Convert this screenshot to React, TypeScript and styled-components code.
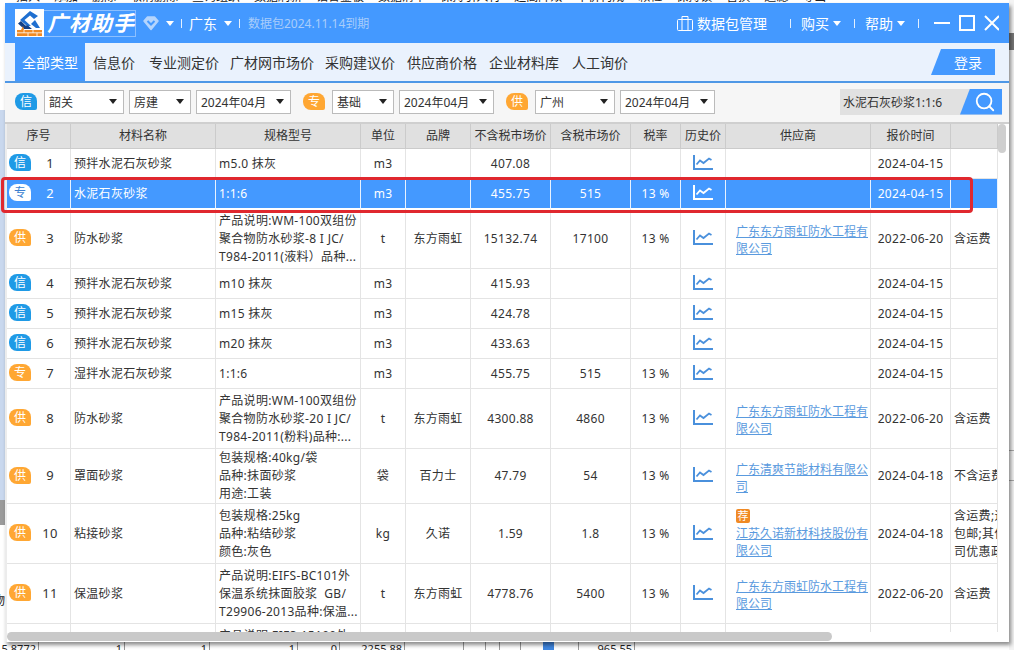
import React from 'react';
import styled, { createGlobalStyle } from 'styled-components';
import { Search } from 'lucide-react';

const FONT = '"Noto Sans", "Noto Sans CJK SC", "Liberation Sans", sans-serif';

const GlobalStyle = createGlobalStyle`
    html, body { margin: 0; padding: 0; }
    body { width: 1014px; height: 650px; overflow: hidden; font-family: ${FONT}; color: #333; }
    * { box-sizing: border-box; }
`;

/* Desktop app lying behind the dialog */
const Desktop = styled.div`
    position: relative;
    width: 1014px;
    height: 650px;
    overflow: hidden;
    background:
        linear-gradient(#fff 0 110px, #c9d8ee 110px 500px, #9b9b9b 500px 525px, #fff 525px) left top / 5px 100% no-repeat,
        linear-gradient(#f4f4f4 0 33px, #777 33px 50px, #f4f4f4 50px 450px, #aaa 450px 451px, #f4f4f4 451px 480px, #aaa 480px 481px, #f4f4f4 481px) right top / 5px 100% no-repeat,
        #fff;
`;

const BackToolbar = styled.div`
    display: flex;
    gap: 14px;
    height: 12px;
    margin-top: -10px;
    padding-left: 16px;
    font-size: 12px;
    line-height: 14px;
    color: #222;
    white-space: nowrap;
`;

const BackRow = styled.div`
    position: absolute;
    left: 0;
    bottom: 0;
    height: 8px;
    display: grid;
    grid-template-columns: 39px 86px 85px 88px 42px 65px 59px 22px 14px 21px 58px 56px;
    font-size: 11px;
    line-height: 14px;
    color: #222;
`;

const BackCell = styled.div`
    height: 8px;
    overflow: hidden;
    text-align: right;
    padding-right: 2px;
    border-right: 1px solid #999;
`;

const BackCheck = styled.div`
    width: 11px;
    height: 8px;
    margin: 0 auto;
    background: #3f86e0;
`;

const EdgeGlyph = styled.span<{ $top: number; $color?: string }>`
    position: absolute;
    left: -7px;
    top: ${(p) => p.$top}px;
    font-size: 12px;
    line-height: 14px;
    color: ${(p) => p.$color ?? '#222'};
`;

const Window = styled.div`
    position: absolute;
    left: 5px;
    top: 3px;
    width: 1004px;
    height: 639px;
    display: flex;
    flex-direction: column;
    background: #fff;
    box-shadow: 2px 3px 4px rgba(0, 0, 0, 0.45);
`;

/* Title bar */
const TitleBar = styled.div`
    flex: none;
    height: 40px;
    display: flex;
    align-items: center;
    gap: 7px;
    padding: 0 10px;
    background: #4499ff;
    color: #fff;
    font-size: 14px;
`;

const Brand = styled.div`
    width: 121px;
    height: 27px;
    display: flex;
    align-items: center;
    gap: 3px;
    border: 1px solid #8cc0ff;
    border-left: none;
`;

const BrandName = styled.span`
    font-size: 21px;
    font-weight: 700;
    font-style: italic;
    letter-spacing: 1px;
    line-height: 26px;
    white-space: nowrap;
`;

const Glyph = styled.svg`
    flex: none;
`;

const Caret = styled.i<{ $color?: string; $size?: number }>`
    flex: none;
    width: 0;
    height: 0;
    border-left: ${(p) => p.$size ?? 4}px solid transparent;
    border-right: ${(p) => p.$size ?? 4}px solid transparent;
    border-top: ${(p) => (p.$size ?? 4) + 1}px solid ${(p) => p.$color ?? '#fff'};
`;

const Sep = styled.i`
    flex: none;
    width: 1px;
    height: 9px;
    background: #e4f0ff;
`;

const Expiry = styled.span`
    margin-left: 1px;
    font-size: 12px;
    color: #a9cdfb;
`;

const TitleRight = styled.div`
    margin-left: auto;
    display: flex;
    align-items: center;
    gap: 10px;
`;

const Menu = styled.span<{ $after?: number; $before?: number }>`
    display: inline-flex;
    align-items: center;
    gap: 4px;
    margin-left: ${(p) => p.$before ?? 0}px;
    margin-right: ${(p) => p.$after ?? 0}px;
    white-space: nowrap;
`;

/* Tabs */
const TabBar = styled.div`
    flex: none;
    height: 40px;
    display: flex;
    padding-left: 10px;
    background: #eaf2fd;
    border-bottom: 2px solid #4f98e6;
    font-size: 14px;
`;

const Tab = styled.div<{ $active?: boolean; $gap?: number }>`
    display: flex;
    align-items: center;
    padding: 0 ${(p) => (p.$active ? 7 : 0)}px;
    margin-right: ${(p) => p.$gap ?? 12}px;
    background: ${(p) => (p.$active ? '#4499ff' : 'transparent')};
    color: ${(p) => (p.$active ? '#fff' : '#333')};
    white-space: nowrap;
`;

const LoginButton = styled.div`
    margin: 6px 14px 0 auto;
    width: 64px;
    height: 26px;
    display: flex;
    align-items: center;
    justify-content: center;
    padding-left: 10px;
    background: #4499ff;
    color: #fff;
    clip-path: polygon(10px 0, 100% 0, 100% 100%, 0 100%);
`;

/* Filters */
const FilterBar = styled.div`
    flex: none;
    height: 41px;
    display: flex;
    align-items: center;
    gap: 12px;
    padding: 0 7px 2px 10px;
    background: #f6f6f6;
    border-bottom: 2px solid #cfcfcf;
`;

const FilterGroup = styled.div`
    display: flex;
    align-items: center;
    gap: 5px;
`;

const Badge = styled.span<{ $kind: string; $selected?: boolean }>`
    flex: none;
    width: 22px;
    height: 17px;
    display: flex;
    align-items: center;
    justify-content: center;
    margin-right: 2px;
    border-radius: 8px 8px 2px 8px;
    font-size: 12px;
    line-height: 17px;
    letter-spacing: 0;
    background: ${(p) => (p.$selected ? '#fff' : p.$kind === '信' ? '#1f9ae6' : '#ffa733')};
    color: ${(p) => (p.$selected ? '#3c7fd0' : '#fff')};
`;

const FakeSelect = styled.div<{ $width: number }>`
    width: ${(p) => p.$width}px;
    height: 24px;
    display: flex;
    align-items: center;
    justify-content: space-between;
    padding: 0 6px 0 4px;
    background: #fff;
    border: 1px solid #bbb;
    font-size: 12px;
    color: #333;
    white-space: nowrap;
`;

const SearchBox = styled.div`
    margin-left: auto;
    width: 162px;
    height: 26px;
    display: flex;
    align-items: center;
    justify-content: space-between;
    padding-left: 3px;
    background: #e1e1e1;
    font-size: 12px;
    white-space: nowrap;
`;

const SearchButton = styled.div`
    width: 42px;
    height: 26px;
    display: flex;
    align-items: center;
    justify-content: center;
    padding-left: 8px;
    background: #4499ff;
    color: #fff;
    clip-path: polygon(10px 0, 100% 0, 100% 100%, 0 100%);
`;

/* Table */
const TableArea = styled.div`
    position: relative;
    flex: 1;
    padding-left: 2px;
    background: linear-gradient(90deg, #ececec 0 2px, #fff 2px);
`;

const TableClip = styled.div`
    width: 991px;
    height: 508px;
    overflow: hidden;
`;

const Table = styled.table`
    width: 991px;
    table-layout: fixed;
    border-collapse: separate;
    border-spacing: 0;
    font-size: 12px;
    line-height: 18px;
    letter-spacing: 0.3px;
`;

const HeadCell = styled.th`
    height: 25px;
    padding: 0;
    font-weight: 400;
    text-align: center;
    white-space: nowrap;
    overflow: hidden;
    background: #e0e0e0;
    border-right: 1px solid #cbcbcb;
    border-bottom: 1px solid #cbcbcb;
    letter-spacing: 0;
`;

const Row = styled.tr<{ $selected?: boolean; $height: number }>`
    height: ${(p) => p.$height}px;
    background: ${(p) => (p.$selected ? '#4499ff' : '#fff')};
    color: ${(p) => (p.$selected ? '#fff' : '#333')};
`;

const Cell = styled.td<{ $left?: boolean }>`
    padding: 0 0 0 ${(p) => (p.$left ? '3px' : '0')};
    text-align: ${(p) => (p.$left ? 'left' : 'center')};
    white-space: pre;
    overflow: hidden;
    border-right: 1px solid #e4e4e4;
    border-bottom: 1px solid #e4e4e4;

    tr[data-selected='true'] > & {
        border-right-color: #e8f2ff;
        border-bottom-color: #fff;
    }
`;

const IndexBox = styled.div`
    display: grid;
    grid-template-columns: 24px 1fr;
    align-items: center;
    padding-left: 2px;
    padding-bottom: 2px;
`;

const IndexNum = styled.span`
    font-size: 13px;
    padding-right: 3px;
`;

const ChartBox = styled.div<{ $selected?: boolean }>`
    display: flex;
    justify-content: center;
    color: ${(p) => (p.$selected ? '#fff' : '#4a90dc')};
    padding-bottom: 3px;
`;

const SupplierCell = styled.td`
    padding: 3px 2px 0 10px;
    line-height: 17px;
    letter-spacing: 0;
    overflow: hidden;
    text-align: left;
    border-right: 1px solid #e4e4e4;
    border-bottom: 1px solid #e4e4e4;

    tr[data-selected='true'] > & {
        border-right-color: #e8f2ff;
        border-bottom-color: #fff;
    }
`;

const SupplierLink = styled.a`
    color: #5a9ade;
    text-decoration: underline;
`;

const RecommendTag = styled.span`
    display: block;
    width: 14px;
    height: 14px;
    margin-top: -3px;
    margin-bottom: 2px;
    border-radius: 2px;
    background: #f08a24;
    color: #fff;
    font-size: 11px;
    line-height: 14px;
    text-align: center;
`;

const VScrollThumb = styled.div`
    position: absolute;
    right: 3px;
    top: 0;
    width: 8px;
    height: 29px;
    border-radius: 4px;
    background: #cfcfcf;
`;

const HScrollThumb = styled.div`
    position: absolute;
    left: 2px;
    bottom: 1px;
    width: 825px;
    height: 9px;
    border-radius: 5px;
    background: #c9c9c9;
`;

const Highlight = styled.div`
    position: absolute;
    left: -4px;
    top: 174px;
    width: 972px;
    height: 36px;
    border: 3px solid #e0282e;
    border-radius: 4px;
`;

/* Drawn icons */
const Logo = () => (
    <Glyph width="29" height="28" viewBox="0 0 29 28">
        <rect width="29" height="28" fill="#fff" />
        <path d="M15 2 L5 11 L12 17 L16 17 L9.5 11 L15 6.5 L19 10 L23 7 Z" fill="#1f6fd0" />
        <path d="M6 12 L3 14.5 L9 20 L17 20 L13 16.5 L10.5 16.5 Z" fill="#123f86" />
        <path d="M20 11 L16 15 L21 19 L25 19 Z" fill="#1f6fd0" />
        <path d="M2 21 H6 L8 17 L9 21 H27 V27 H2 Z" fill="#f08a24" />
        <path d="M2 23.8 H27 M9 21 V23.8 M18 21 V23.8 M13 23.8 V27 M22 23.8 V27" stroke="#fff" strokeWidth="0.8" />
    </Glyph>
);

const GemIcon = () => (
    <Glyph width="16" height="16" viewBox="0 0 16 16">
        <path d="M4.5 2 H11.5 L15 6 L8 14.5 L1 6 Z" fill="#b5d5fd" stroke="#b5d5fd" strokeWidth="1.5" strokeLinejoin="round" />
        <path d="M4.5 6 L8 9.5 L11.5 6" fill="none" stroke="#4499ff" strokeWidth="2" />
    </Glyph>
);

const BagIcon = () => (
    <Glyph width="16" height="16" viewBox="0 0 16 16" fill="none" stroke="#fff" strokeWidth="1">
        <rect x="0.5" y="4.5" width="15" height="11" rx="1" />
        <path d="M5 4.5 V1.5 H11 V4.5 M5 4.5 V15.5 M11 4.5 V15.5" />
    </Glyph>
);

const WindowControls = () => (
    <Glyph width="65" height="16" viewBox="0 0 65 16" fill="none" stroke="#fff" strokeWidth="2">
        <path d="M0 8 H16" />
        <rect x="26" y="1" width="14" height="14" />
        <path d="M51 1 L65 15 M65 1 L51 15" />
    </Glyph>
);

const ChartIcon = () => (
    <Glyph width="20" height="15" viewBox="0 0 20 15" fill="none" stroke="currentColor">
        <path d="M1 0 V14 H20" strokeWidth="2" />
        <path d="M3.5 9.5 L7 5.5 L10.5 8 L16 3.5 L18.5 5" strokeWidth="1.8" />
    </Glyph>
);

const columns: [string, number][] = [
    ['序号', 64], ['材料名称', 145], ['规格型号', 145], ['单位', 45], ['品牌', 65], ['不含税市场价', 80],
    ['含税市场价', 80], ['税率', 50], ['历史价', 45], ['供应商', 145], ['报价时间', 80], ['', 47],
];

const YUHONG = '广东东方雨虹防水工程有限公司';

type Item = {
    kind: string; name: string; spec: string; unit: string; brand?: string; ex?: string; inc?: string;
    rate?: string; supplier?: string; tag?: boolean; date: string; note?: string; h: number; selected?: boolean;
};

const items: Item[] = [
    { kind: '信', name: '预拌水泥石灰砂浆', spec: 'm5.0 抹灰', unit: 'm3', ex: '407.08', date: '2024-04-15', h: 30 },
    { kind: '专', name: '水泥石灰砂浆', spec: '1:1:6', unit: 'm3', ex: '455.75', inc: '515', rate: '13 %', date: '2024-04-15', h: 30, selected: true },
    { kind: '供', name: '防水砂浆', spec: '产品说明:WM-100双组份\n聚合物防水砂浆-8 I JC/\nT984-2011(液料）品种...', unit: 't', brand: '东方雨虹', ex: '15132.74', inc: '17100', rate: '13 %', supplier: YUHONG, date: '2022-06-20', note: '含运费', h: 60 },
    { kind: '信', name: '预拌水泥石灰砂浆', spec: 'm10 抹灰', unit: 'm3', ex: '415.93', date: '2024-04-15', h: 30 },
    { kind: '信', name: '预拌水泥石灰砂浆', spec: 'm15 抹灰', unit: 'm3', ex: '424.78', date: '2024-04-15', h: 30 },
    { kind: '信', name: '预拌水泥石灰砂浆', spec: 'm20 抹灰', unit: 'm3', ex: '433.63', date: '2024-04-15', h: 30 },
    { kind: '专', name: '湿拌水泥石灰砂浆', spec: '1:1:6', unit: 'm3', ex: '455.75', inc: '515', rate: '13 %', date: '2024-04-15', h: 30 },
    { kind: '供', name: '防水砂浆', spec: '产品说明:WM-100双组份\n聚合物防水砂浆-20 I JC/\nT984-2011(粉料)品种:...', unit: 't', brand: '东方雨虹', ex: '4300.88', inc: '4860', rate: '13 %', supplier: YUHONG, date: '2022-06-20', note: '含运费', h: 60 },
    { kind: '供', name: '罩面砂浆', spec: '包装规格:40kg/袋\n品种:抹面砂浆\n用途:工装', unit: '袋', brand: '百力士', ex: '47.79', inc: '54', rate: '13 %', supplier: '广东清爽节能材料有限公司', date: '2024-04-18', note: '不含运费', h: 54 },
    { kind: '供', name: '粘接砂浆', spec: '包装规格:25kg\n品种:粘结砂浆\n颜色:灰色', unit: 'kg', brand: '久诺', ex: '1.59', inc: '1.8', rate: '13 %', supplier: '江苏久诺新材科技股份有限公司', tag: true, date: '2024-04-18', note: '含运费;运费\n包邮;其他公\n司优惠政策', h: 60 },
    { kind: '供', name: '保温砂浆', spec: '产品说明:EIFS-BC101外\n保温系统抹面胶浆  GB/\nT29906-2013品种:保温...', unit: 't', brand: '东方雨虹', ex: '4778.76', inc: '5400', rate: '13 %', supplier: YUHONG, date: '2022-06-20', note: '含运费', h: 60 },
    { kind: '供', name: '保温砂浆', spec: '产品说明:EIFS-15100外\n保温系统粘结胶浆  GB/\nT29906-2013品种:保温...', unit: 't', brand: '东方雨虹', ex: '4778.76', inc: '5400', rate: '13 %', supplier: YUHONG, date: '2022-06-20', note: '含运费', h: 60 },
];

const filters: { kind: string; selects: [string, number][] }[] = [
    { kind: '信', selects: [['韶关', 80], ['房建', 62], ['2024年04月', 95]] },
    { kind: '专', selects: [['基础', 62], ['2024年04月', 95]] },
    { kind: '供', selects: [['广州', 80], ['2024年04月', 95]] },
];

const tabs: [string, number][] = [
    ['信息价', 14], ['专业测定价', 11], ['广材网市场价', 11], ['采购建议价', 12],
    ['供应商价格', 12], ['企业材料库', 13], ['人工询价', 0],
];

const backTools = ['插入', '添加', '删除', '取消删除', '查询组织', '数据刷新', '铝合金板', '数据清单', '保持引入材', '超高降效', '单价构成', '颗粒', '保持锁', '替换', '过滤', '导出'];
const backCells = ['5.8772', '1', '1', '1', '0', '2255.88', '', '', '', '', '', '965.55'];

export default function App() {
    return (
        <Desktop>
            <GlobalStyle />
            <BackToolbar>
                {backTools.map((t) => <span key={t}>{t}</span>)}
            </BackToolbar>
            <EdgeGlyph $top={594}>物</EdgeGlyph>
            <EdgeGlyph $top={618} $color="#8a4bb0">3</EdgeGlyph>
            <BackRow>
                {backCells.map((c, i) => (
                    <BackCell key={i}>{i === 10 ? <BackCheck /> : c}</BackCell>
                ))}
            </BackRow>

            <Window>
                <TitleBar>
                    <Brand>
                        <Logo />
                        <BrandName>广材助手</BrandName>
                    </Brand>
                    <GemIcon />
                    <Caret />
                    <Sep />
                    <span>广东</span>
                    <Caret />
                    <Sep />
                    <Expiry>数据包2024.11.14到期</Expiry>
                    <TitleRight>
                        <Menu $after={13}><BagIcon />数据包管理</Menu>
                        <Sep />
                        <Menu $after={3}>购买<Caret /></Menu>
                        <Sep />
                        <Menu $after={3}>帮助<Caret /></Menu>
                        <Sep />
                        <Menu $before={5}><WindowControls /></Menu>
                    </TitleRight>
                </TitleBar>

                <TabBar>
                    <Tab $active $gap={8}>全部类型</Tab>
                    {tabs.map(([t, gap]) => <Tab key={t} $gap={gap}>{t}</Tab>)}
                    <LoginButton>登录</LoginButton>
                </TabBar>

                <FilterBar>
                    {filters.map((f) => (
                        <FilterGroup key={f.kind}>
                            <Badge $kind={f.kind}>{f.kind}</Badge>
                            {f.selects.map(([label, width], i) => (
                                <FakeSelect key={i} $width={width}>
                                    {label}
                                    <Caret $color="#222" />
                                </FakeSelect>
                            ))}
                        </FilterGroup>
                    ))}
                    <SearchBox>
                        水泥石灰砂浆1:1:6
                        <SearchButton><Search size={22} strokeWidth={2} /></SearchButton>
                    </SearchBox>
                </FilterBar>

                <TableArea>
                    <TableClip>
                        <Table>
                            <colgroup>
                                {columns.map(([, w], i) => <col key={i} width={w} />)}
                            </colgroup>
                            <thead>
                                <tr>
                                    {columns.map(([label], i) => <HeadCell key={i}>{label}</HeadCell>)}
                                </tr>
                            </thead>
                            <tbody>
                                {items.map((it, i) => (
                                    <Row key={i} $height={it.h} $selected={it.selected} data-selected={it.selected ? 'true' : 'false'}>
                                        <Cell>
                                            <IndexBox>
                                                <Badge $kind={it.kind} $selected={it.selected}>{it.kind}</Badge>
                                                <IndexNum>{i + 1}</IndexNum>
                                            </IndexBox>
                                        </Cell>
                                        <Cell $left>{it.name}</Cell>
                                        <Cell $left>{it.spec}</Cell>
                                        <Cell>{it.unit}</Cell>
                                        <Cell>{it.brand}</Cell>
                                        <Cell>{it.ex}</Cell>
                                        <Cell>{it.inc}</Cell>
                                        <Cell>{it.rate}</Cell>
                                        <Cell>
                                            <ChartBox $selected={it.selected}><ChartIcon /></ChartBox>
                                        </Cell>
                                        <SupplierCell>
                                            {it.tag && <RecommendTag>荐</RecommendTag>}
                                            {it.supplier && <SupplierLink>{it.supplier}</SupplierLink>}
                                        </SupplierCell>
                                        <Cell>{it.date}</Cell>
                                        <Cell $left>{it.note}</Cell>
                                    </Row>
                                ))}
                            </tbody>
                        </Table>
                    </TableClip>
                    <VScrollThumb />
                    <HScrollThumb />
                </TableArea>

                <Highlight />
            </Window>
        </Desktop>
    );
}
